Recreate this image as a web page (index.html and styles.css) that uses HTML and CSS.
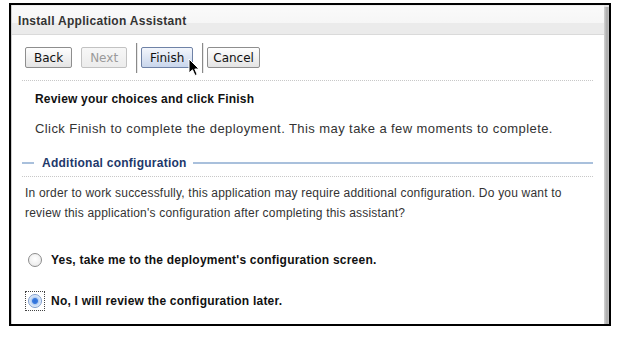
FILE: index.html
```html
<!DOCTYPE html>
<html lang="en">
<head>
  <meta charset="UTF-8" />
  <title>Install Application Assistant</title>
  <link rel="stylesheet" href="styles.css">
</head>
<body>

  <div class="frame">
    <div class="panel">
      <div class="titlebar">Install Application Assistant</div>

      <div class="toolbar">
        <button class="btn">Back</button>
        <button class="btn" disabled>Next</button>
        <span class="sep"></span>
        <span class="finish-wrap">
          <button class="btn primary">Finish</button>
          <svg class="cursor" width="13" height="19" viewBox="0 0 13 19">
            <path d="M1 1 L1 15 L4.5 11.8 L7 17.5 L9.2 16.5 L6.8 11 L11 11 Z" fill="#000" stroke="#fff" stroke-width="1" stroke-linejoin="round" />
          </svg>
        </span>
        <span class="sep"></span>
        <button class="btn cancel">Cancel</button>
      </div>

      <h2 class="step-title">Review your choices and click Finish</h2>
      <p class="step-text">Click Finish to complete the deployment. This may take a few moments to complete.</p>

      <div class="group">
        <div class="legend">
          <span class="legend-line short"></span>
          <span class="legend-text">Additional configuration</span>
          <span class="legend-line"></span>
        </div>
      </div>

      <p class="group-text">In order to work successfully, this application may require additional configuration. Do you want to review this application's configuration after completing this assistant?</p>

      <label class="choice yes">
        <span class="radio"></span>
        Yes, take me to the deployment's configuration screen.
      </label>
      <label class="choice no">
        <span class="focus"><span class="radio checked"></span></span>
        No, I will review the configuration later.
      </label>
    </div>
    <div class="scroll"></div>
  </div>

</body>
</html>
```

FILE: styles.css
```css
body {
  margin: 0;
  background: #fff;
  font-family: "Liberation Sans", Arial, sans-serif;
  color: #222;
}
.frame {
  margin: 3px 0 0 9px;
  width: 598px;
  height: 319px;
  border: 2px solid #000;
  display: flex;
  overflow: hidden;
}
.panel {
  flex: 1;
  border-left: 1px solid #cfcfcf;
}
.scroll {
  width: 5px;
  background: linear-gradient(to right, #d4d4d4, #a9a9a9 60%, #c4c4c4);
  border-top: 2px solid #e4e4e4;
}
.titlebar {
  height: 28px;
  line-height: 30px;
  padding-left: 6px;
  font-size: 12px;
  font-weight: bold;
  letter-spacing: 0.3px;
  color: #333;
  background: linear-gradient(#fafafa, #f6f6f6 60%, #ebebeb 60%, #ebebeb);
  border-top: 1px solid #eee;
  border-bottom: 1px solid #dadada;
}
.toolbar {
  height: 45px;
  margin: 0 11px 0 10px;
  padding-left: 3px;
  display: flex;
  align-items: center;
  border-bottom: 1px dotted #c8c8c8;
}
.btn {
  font-family: "DejaVu Sans", sans-serif;
  font-size: 12px;
  height: 21px;
  padding: 0 8px;
  margin-right: 9px;
  color: #111;
  border: 1px solid #8e8e8e;
  border-radius: 2px;
  background: linear-gradient(#fefefe, #e4e4e4);
}
.btn.cancel {
  padding: 0 5px;
}
.btn[disabled] {
  color: #9a9a9a;
  border-color: #c2c2c2;
  background: linear-gradient(#f7f7f7, #ececec);
}
.btn.primary {
  border-color: #6f82a6;
  background: linear-gradient(#f3f6fc, #c9d6ec);
}
.sep {
  width: 1px;
  height: 30px;
  background: #8a8a8a;
  box-shadow: 1px 0 #e8e8e8;
  margin-right: 4px;
}
.finish-wrap {
  position: relative;
  display: flex;
}
.cursor {
  position: absolute;
  left: 47px;
  top: 11px;
}
.step-title {
  margin: 8px 0 0 23px;
  font-size: 12px;
  line-height: 20px;
  letter-spacing: 0.2px;
  color: #111;
}
.step-text {
  margin: 10px 0 0 23px;
  font-size: 13px;
  line-height: 20px;
  letter-spacing: 0.42px;
  color: #333;
}
.group {
  margin: 14px 11px 0 10px;
  padding-bottom: 3px;
  border-bottom: 1px dotted #c8c8c8;
}
.legend {
  display: flex;
  align-items: center;
  height: 20px;
}
.legend-line {
  flex: 1;
  height: 2px;
  background: #a9c0dc;
}
.legend-line.short {
  flex: 0 0 12px;
}
.legend-text {
  padding: 0 6px 0 8px;
  font-size: 12px;
  font-weight: bold;
  letter-spacing: 0.25px;
  color: #22386a;
}
.group-text {
  margin: 6px 20px 0 13px;
  font-size: 12px;
  line-height: 20px;
  letter-spacing: 0.2px;
  color: #333;
}
.choice {
  display: flex;
  align-items: center;
  height: 20px;
  font-size: 12px;
  font-weight: bold;
  letter-spacing: 0.22px;
  color: #111;
}
.choice.yes {
  margin-top: 27px;
  padding-left: 16px;
  gap: 9px;
}
.choice.no {
  margin-top: 21px;
  padding-left: 13px;
  gap: 6px;
}
.radio {
  width: 12px;
  height: 12px;
  border: 1px solid #8c8c8c;
  border-radius: 50%;
  background: radial-gradient(circle at 50% 40%, #fff, #e6e6e6);
}
.radio.checked {
  border-color: #7d9ccc;
  background: radial-gradient(circle at 50% 50%, #2d6fd6 0, #3b7be0 2.5px, #b5cff2 3.5px, #e9f1fc 6px);
}
.focus {
  width: 18px;
  height: 18px;
  border: 1px dotted #444;
  display: flex;
  align-items: center;
  justify-content: center;
}
```
